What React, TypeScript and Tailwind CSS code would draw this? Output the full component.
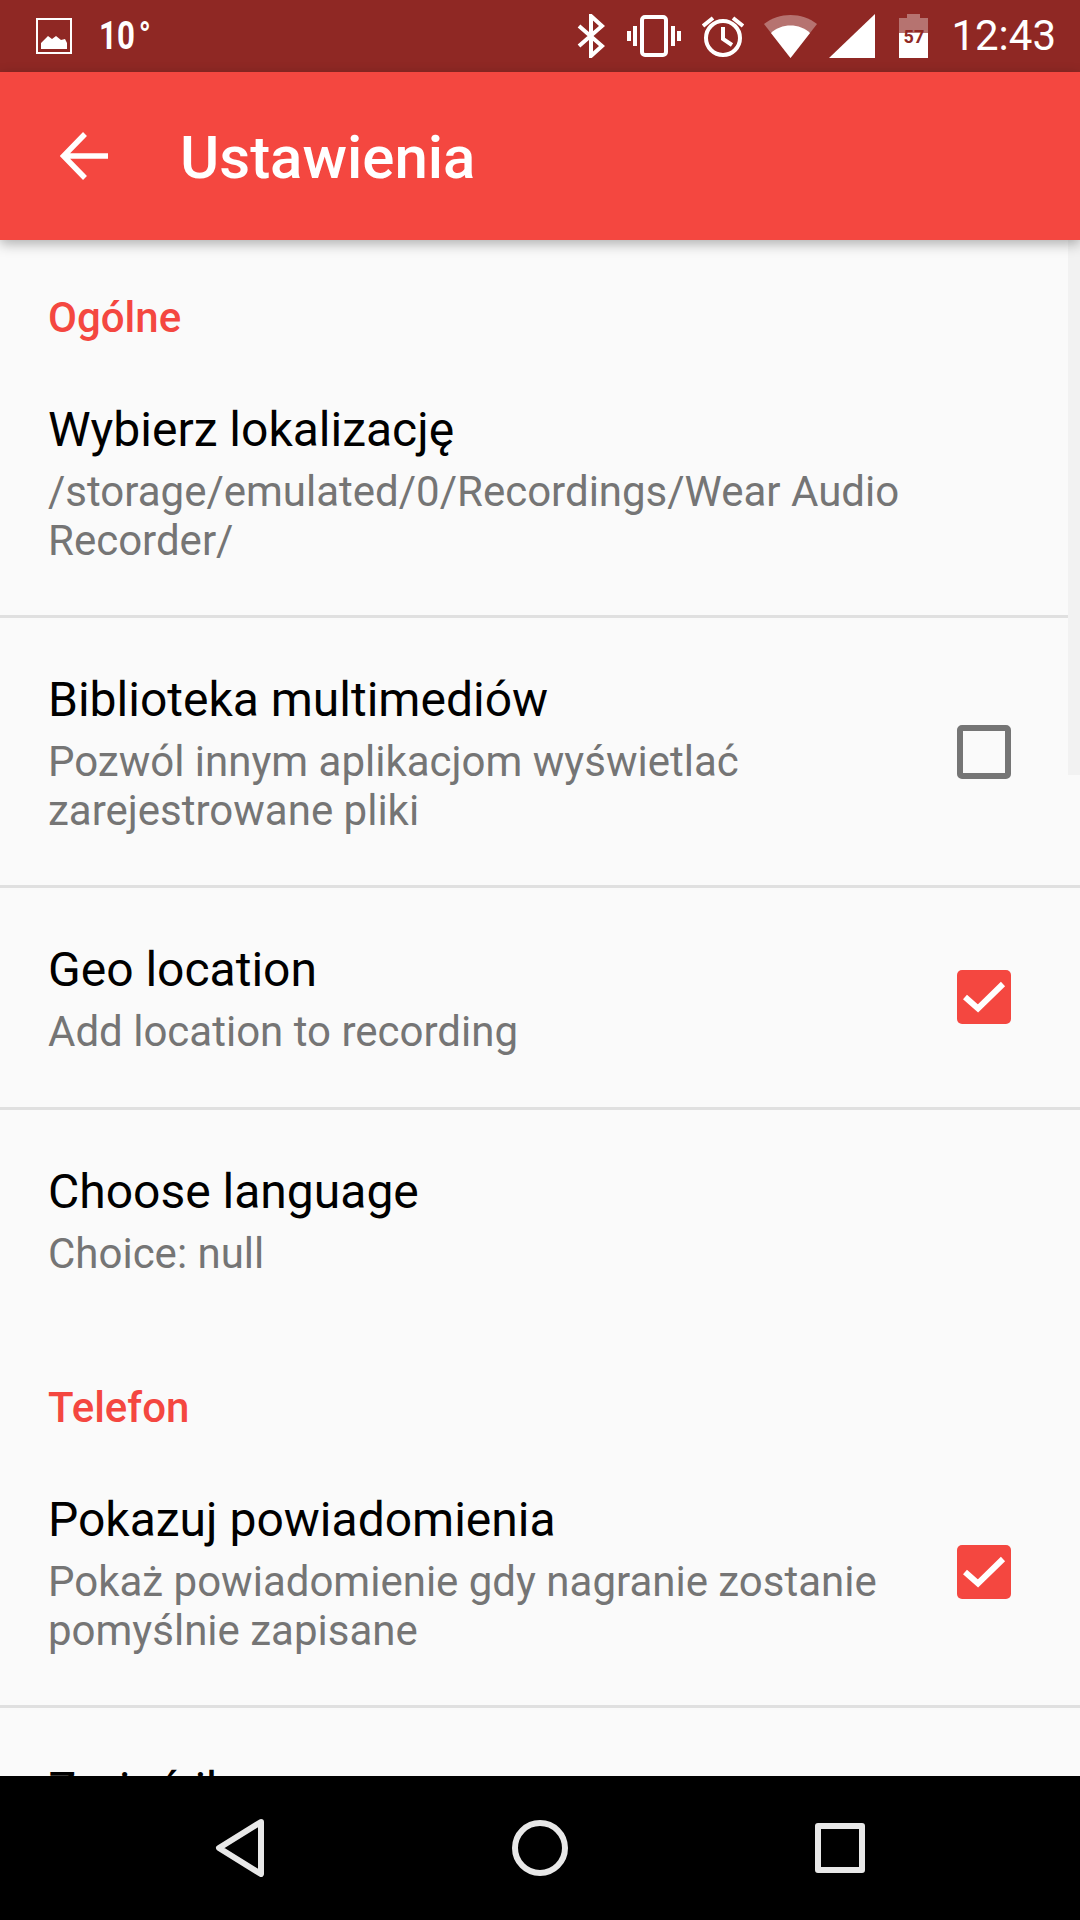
type Pref = { title: string; sub?: string[]; check?: boolean };

const general: Pref[] = [
  { title: 'Wybierz lokalizację', sub: ['/storage/emulated/0/Recordings/Wear Audio', 'Recorder/'] },
  { title: 'Biblioteka multimediów', sub: ['Pozwól innym aplikacjom wyświetlać', 'zarejestrowane pliki'], check: false },
  { title: 'Geo location', sub: ['Add location to recording'], check: true },
];

function Checkbox({ on }: { on: boolean }) {
  if (on) {
    return (
      <div className="h-[54px] w-[54px] shrink-0 rounded-[5px] bg-[#f44740]">
        <svg width="54" height="54" viewBox="0 0 54 54" fill="none">
          <path d="M8 27 L21 38.500 L46 14" stroke="#fff" strokeWidth="6" />
        </svg>
      </div>
    );
  }
  return <div className="h-[54px] w-[54px] shrink-0 rounded-[5px] border-[6px] border-[#757575]" />;
}

function Row({ pref, divider = true }: { pref: Pref; divider?: boolean }) {
  const oneLine = pref.sub?.length === 1;
  return (
    <div className={`flex items-center justify-between pl-[48px] pr-[69px] pt-[50px] ${oneLine ? 'pb-[51px]' : 'pb-[50px]'} ${divider ? 'border-b-[3px] border-[#e0e0e0]' : ''}`}>
      <div>
        <div className="mb-[5px] text-[48px] leading-[64px] text-black">{pref.title}</div>
        {pref.sub?.map((line) => (
          <div key={line} className="text-[42px] leading-[49px] text-[#757575]">{line}</div>
        ))}
      </div>
      {pref.check !== undefined && <Checkbox on={pref.check} />}
    </div>
  );
}

function StatusBar() {
  return (
    <div className="flex h-[72px] shrink-0 items-center justify-between bg-[#8f2824] text-white">
      <div className="flex items-center">
        <svg className="ml-[36px]" width="36" height="36" viewBox="0 0 36 36" fill="none">
          <rect x="1" y="1" width="34" height="34" stroke="#fff" strokeWidth="2" />
          <path d="M5 31 V25 L12 18 L16 21 L20 18 L25 22 L29 21 L31 25 V31 Z" fill="#fff" />
        </svg>
        <span className="ml-[27px] inline-block origin-left scale-x-[0.8] text-[39px] font-bold leading-none">
          10<span className="ml-[5px]">°</span>
        </span>
      </div>
      <div className="flex items-center">
        <svg width="28" height="44" viewBox="0 0 28 44" fill="none" stroke="#fff" strokeWidth="4">
          <path d="M2 12 L25 32 L14 42 V2 L25 12 L2 32" />
        </svg>
        <svg className="ml-[22px]" width="54" height="42" viewBox="0 0 54 42" fill="none" stroke="#fff">
          <rect x="15" y="2" width="24" height="38" rx="3" strokeWidth="4" />
          <path d="M8 11 V31 M2 16 V26 M46 11 V31 M52 16 V26" strokeWidth="4" />
        </svg>
        <svg className="ml-[21px]" width="42" height="44" viewBox="0 0 42 44" fill="none" stroke="#fff" strokeWidth="4">
          <circle cx="21" cy="24" r="17" />
          <path d="M21 13 V25 L30 31 M1 12 L11 4 M41 12 L31 4" />
        </svg>
        <svg className="ml-[20px]" width="53" height="43" viewBox="0 0 53 43">
          <path d="M0 9 C15 -3 38 -3 53 9 L26.500 43 Z" fill="#fff" fillOpacity="0.35" />
          <path d="M7 18 C17 8 36 8 46 18 L26.500 43 Z" fill="#fff" />
        </svg>
        <svg className="ml-[12px]" width="46" height="44" viewBox="0 0 46 44">
          <path d="M0 44 L46 0 V44 Z" fill="#fff" />
        </svg>
        <div className="relative ml-[24px] h-[44px] w-[29px]">
          <svg width="29" height="44" viewBox="0 0 29 44">
            <path d="M8 0 H21 V4 H29 V19 H0 V4 H8 Z" fill="#fff" fillOpacity="0.35" />
            <path d="M0 19 H29 V44 H0 Z" fill="#fff" />
          </svg>
          <span className="absolute inset-x-0 top-[14px] text-center text-[18px] font-bold leading-[18px] text-[#8f2824]">57</span>
        </div>
        <span className="ml-[23px] mr-[24px] text-[42px] leading-none">12:43</span>
      </div>
    </div>
  );
}

export default function App() {
  return (
    <div className="flex h-[1920px] w-[1080px] flex-col overflow-hidden bg-[#fafafa]" style={{ fontFamily: 'Roboto, sans-serif' }}>
      <StatusBar />
      <div className="relative z-10 flex h-[168px] shrink-0 items-center bg-[#f44740] pl-[60px] text-white shadow-[0_4px_12px_rgba(0,0,0,0.3)]">
        <svg width="48" height="48" viewBox="0 0 48 48" fill="none" stroke="#fff" strokeWidth="5.500">
          <path d="M48 24 H4 M25 2 L3.500 24 L25 46" />
        </svg>
        <span className="ml-[72px] pt-[4px] text-[60px] font-medium leading-none">Ustawienia</span>
      </div>
      <div className="relative min-h-0 flex-1 overflow-hidden">
        <div className="absolute right-0 top-0 h-[535px] w-[12px] bg-[#f2f2f2]" />
        <div className="pb-[6px] pl-[48px] pt-[54px] text-[42px] font-medium leading-[48px] text-[#f44740]">Ogólne</div>
        {general.map((p) => <Row key={p.title} pref={p} />)}
        <Row pref={{ title: 'Choose language', sub: ['Choice: null'] }} divider={false} />
        <div className="pb-[6px] pl-[48px] pt-[55px] text-[42px] font-medium leading-[48px] text-[#f44740]">Telefon</div>
        <Row pref={{ title: 'Pokazuj powiadomienia', sub: ['Pokaż powiadomienie gdy nagranie zostanie', 'pomyślnie zapisane'], check: true }} />
        <Row pref={{ title: 'Zmień ikonę' }} divider={false} />
      </div>
      <div className="flex h-[144px] shrink-0 items-center bg-black">
        <svg className="ml-[215px]" width="50" height="58" viewBox="0 0 50 58" fill="none">
          <path d="M46 3 L4 29 L46 55 Z" stroke="#e8e8e8" strokeWidth="6" strokeLinejoin="round" />
        </svg>
        <svg className="ml-[247px]" width="56" height="56" viewBox="0 0 56 56" fill="none">
          <circle cx="28" cy="28" r="25" stroke="#e8e8e8" strokeWidth="6" />
        </svg>
        <div className="ml-[247px] h-[50px] w-[50px] rounded-[3px] border-[6px] border-[#e8e8e8]" />
      </div>
    </div>
  );
}
